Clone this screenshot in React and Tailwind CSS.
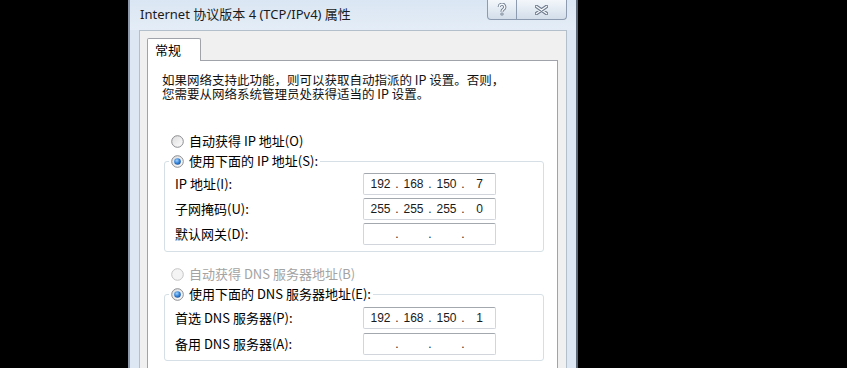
import React from "react";

const cjk = "font-['Noto_Sans_CJK_SC',sans-serif]";

function Radio({ checked, disabled }) {
  return (
    <svg width="13" height="13" viewBox="0 0 13 13" className="shrink-0">
      <defs>
        <linearGradient id="rfill" x1="0" y1="0" x2="1" y2="1">
          <stop offset="0" stopColor="#dcdcdc" />
          <stop offset="1" stopColor="#ffffff" />
        </linearGradient>
        <radialGradient id="rdot" cx="0.4" cy="0.35" r="0.7">
          <stop offset="0" stopColor="#9fd3ff" />
          <stop offset="0.6" stopColor="#2f7fd6" />
          <stop offset="1" stopColor="#1a4f99" />
        </radialGradient>
      </defs>
      <circle cx="6.5" cy="6.5" r="5.8" fill={disabled ? "#f4f4f4" : "url(#rfill)"} stroke={disabled ? "#c4c4c4" : "#8a8c8f"} strokeWidth="1" />
      {checked ? <circle cx="6.5" cy="6.5" r="3.3" fill="url(#rdot)" /> : null}
    </svg>
  );
}

function RadioLabel({ checked, disabled, children }) {
  return (
    <div className={`flex h-[20px] items-center gap-[5px] ${disabled ? "text-[#a3a3a3]" : "text-black"}`}>
      <Radio checked={checked} disabled={disabled} />
      <span className="whitespace-nowrap">{children}</span>
    </div>
  );
}

function IpBox({ parts }) {
  return (
    <div className="flex h-[22px] w-[133px] items-center rounded-[2px] border border-[#d2d6dc] border-t-[#a3a7ae] bg-white pl-[3px] font-['Liberation_Sans',sans-serif] text-[12px] text-[#1a1a1a]">
      {parts.map((p, i) => (
        <React.Fragment key={i}>
          {i > 0 ? <span className="w-[6px] text-center">.</span> : null}
          <span className="w-[27px] text-center">{p}</span>
        </React.Fragment>
      ))}
    </div>
  );
}

function Row({ label, parts }) {
  return (
    <div className="flex h-[22px] items-center">
      <span className="w-[188px] whitespace-nowrap">{label}</span>
      <IpBox parts={parts} />
    </div>
  );
}

export default function App() {
  const empty = ["", "", "", ""];
  return (
    <div className={`h-[368px] w-[847px] overflow-hidden bg-black pl-[128px] ${cjk} text-[13px]`}>
      <div className="flex h-full w-[450px] flex-col border-l-2 border-r-2 border-l-[#8e9aab] border-r-[#5d6877] bg-[#dce7f3]">
        {/* title bar */}
        <div className="flex h-[30px] shrink-0 items-start justify-between bg-linear-to-b from-[#dae6f3] to-[#e4edf7] pl-[10px] pr-[9px]">
          <div className="mt-[5px] whitespace-nowrap font-['Noto_Sans','Noto_Sans_CJK_SC',sans-serif] text-[13px] text-[#1b1b1b]">
            Internet 协议版本 4 (TCP/IPv4) 属性
          </div>
          <div className="flex h-[20px]">
            <div className="flex w-[30px] items-center justify-center rounded-bl-[4px] border border-t-0 border-[#8d9bb0] bg-linear-to-b from-[#f3f7fb] to-[#d3deea]">
              <svg width="10" height="13" viewBox="0 0 10 13">
                <path d="M2.3 4 a2.7 2.7 0 1 1 4 2.3 c-1.2 .7 -1.3 1.2 -1.3 2.4" fill="none" stroke="#6d7a8c" strokeWidth="3.2" />
                <path d="M2.3 4 a2.7 2.7 0 1 1 4 2.3 c-1.2 .7 -1.3 1.2 -1.3 2.4" fill="none" stroke="#f5f8fb" strokeWidth="1.4" />
                <circle cx="5" cy="11" r="1.6" fill="#6d7a8c" />
                <circle cx="5" cy="11" r="0.7" fill="#f5f8fb" />
              </svg>
            </div>
            <div className="flex w-[50px] items-center justify-center rounded-br-[4px] border border-t-0 border-l-0 border-[#8d9bb0] bg-linear-to-b from-[#f3f7fb] to-[#d3deea]">
              <svg width="13" height="10" viewBox="0 0 13 10">
                <path d="M1.5 1.5 L11.5 8.5 M11.5 1.5 L1.5 8.5" stroke="#6d7a8c" strokeWidth="3.4" strokeLinecap="round" />
                <path d="M1.5 1.5 L11.5 8.5 M11.5 1.5 L1.5 8.5" stroke="#f5f8fb" strokeWidth="1.5" strokeLinecap="round" />
              </svg>
            </div>
          </div>
        </div>

        {/* client area */}
        <div className="ml-[9px] mr-[9px] flex flex-1 flex-col border border-b-0 border-[#b4bfcc] bg-[#f0f0f0] pl-[7px] pr-[8px] pt-[7px]">
          <div className="relative z-10 -mb-px flex h-[23px] w-[54px] items-center rounded-t-[2px] border border-b-0 border-[#a0a3aa] bg-white pl-[7px] text-black">
            常规
          </div>
          <div className="flex flex-1 flex-col border border-b-0 border-[#a0a3aa] bg-white pl-[14px] pt-[12px] text-black">
            <p className="whitespace-nowrap text-[12.5px] leading-[14px] text-[#111]">
              如果网络支持此功能，则可以获取自动指派的 IP 设置。否则，
              <br />
              您需要从网络系统管理员处获得适当的 IP 设置。
            </p>

            <div className="ml-[9px] mt-[30px]">
              <RadioLabel>自动获得 IP 地址(O)</RadioLabel>
            </div>
            <fieldset className="ml-[2px] w-[380px] rounded-[3px] border border-[#d5dfe5] p-0">
              <legend className="ml-[4px] px-[2px]">
                <RadioLabel checked>使用下面的 IP 地址(S):</RadioLabel>
              </legend>
              <div className="flex flex-col gap-[3px] pb-[6px] pl-[10px] pt-[2px]">
                <Row label="IP 地址(I):" parts={["192", "168", "150", "7"]} />
                <Row label="子网掩码(U):" parts={["255", "255", "255", "0"]} />
                <Row label="默认网关(D):" parts={empty} />
              </div>
            </fieldset>

            <div className="ml-[9px] mt-[12px]">
              <RadioLabel disabled>自动获得 DNS 服务器地址(B)</RadioLabel>
            </div>
            <fieldset className="ml-[2px] w-[380px] rounded-[3px] border border-[#d5dfe5] p-0">
              <legend className="ml-[4px] px-[2px]">
                <RadioLabel checked>使用下面的 DNS 服务器地址(E):</RadioLabel>
              </legend>
              <div className="flex flex-col gap-[4px] pb-[5px] pl-[10px] pt-[3px]">
                <Row label="首选 DNS 服务器(P):" parts={["192", "168", "150", "1"]} />
                <Row label="备用 DNS 服务器(A):" parts={empty} />
              </div>
            </fieldset>
          </div>
        </div>
      </div>
    </div>
  );
}
